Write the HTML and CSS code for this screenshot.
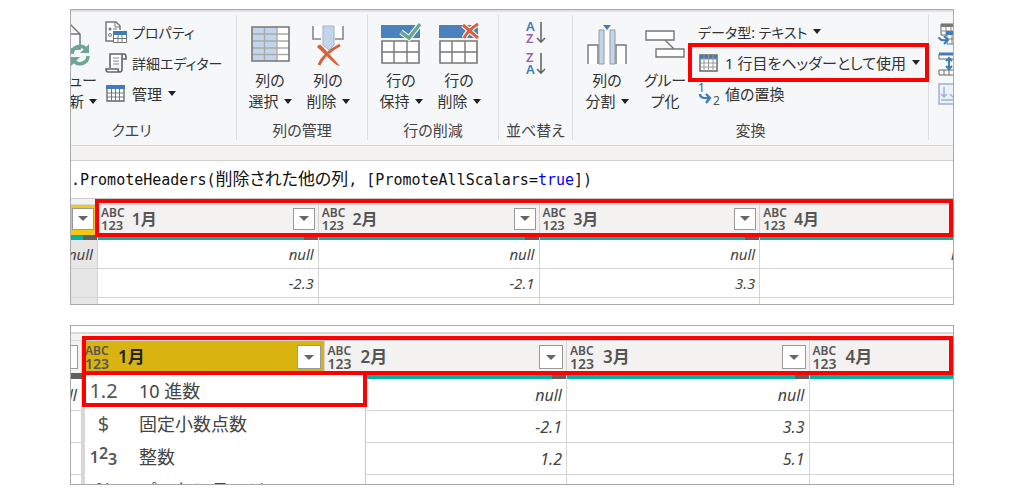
FILE: index.html
```html
<!DOCTYPE html>
<html lang="ja">
<head>
<meta charset="utf-8">
<title>Power Query エディター</title>
<link rel="stylesheet" href="styles.css">
</head>
<body>
<main class="page">
<section class="panel">
  <div class="ribbon">
    <div class="group group-query">
      <div class="tools">
        <button class="big refresh">
          <svg width="28" height="42" viewBox="0 0 28 42"><path d="M0 1h7l10 10v15H0M7 1v10h10" fill="#fff" stroke="#777" stroke-width="1.5"/><path d="M9 31a8 8 0 0 1 14-5M25 33a8 8 0 0 1-14 5" fill="none" stroke="#6aa88f" stroke-width="3.5"/><path d="M26 21v9h-9zM8 43v-9h9z" fill="#6aa88f"/></svg>
          <span>ビュー</span><span>新<i class="caret"></i></span>
        </button>
        <div class="stack">
          <button class="row kana"><svg width="22" height="22" viewBox="0 0 22 22"><path d="M8 20H1V1h10l4 4v4" fill="#fff" stroke="#777" stroke-width="1.5"/><path d="M10 1v5h5" fill="none" stroke="#777"/><circle cx="5" cy="8" r="1.5" fill="#777"/><circle cx="5" cy="14" r="1.5" fill="none" stroke="#777"/><path d="M8 8h4" stroke="#777"/><path d="M8.500 10.500h13v11h-13z" fill="#fff" stroke="#777"/><path d="M8 10h14v4H8z" fill="#3f7cbb"/><path d="M9 17.500h12M13 14v7M17 14v7" stroke="#777"/></svg>プロパティ</button>
          <button class="row kana"><svg width="22" height="22" viewBox="0 0 22 22"><path d="M5 16V2h14q2 0 2 3v2h-4M17 7V4q0-2 2-2M17 7v10q0 3-2 3H3q-2 0-2-3h12q0 3 2 3" fill="#fff" stroke="#666" stroke-width="1.6"/><path d="M8 6h6M8 9h6M8 12h6" stroke="#888"/></svg>詳細エディター</button>
          <button class="row"><svg width="22" height="20" viewBox="0 0 22 20"><path d="M2 2h17v15H2z" fill="#fff" stroke="#666" stroke-width="1.3"/><path d="M1 1h19v4H1z" fill="#3f7cbb"/><path d="M2 9h17M2 13h17M6.500 5v12M10.500 5v12M14.500 5v12" stroke="#777"/></svg>管理<i class="caret"></i></button>
        </div>
      </div>
      <div class="label">クエリ</div>
    </div>
    <div class="group">
      <div class="tools centered">
        <button class="big">
          <svg width="39" height="42" viewBox="0 0 39 42"><path d="M1 4h37v34H1z" fill="#fff"/><path d="M1 4h25v34H1z" fill="#c2d5ea"/><path d="M1 11h37M1 18h37M1 25h37M1 31.500h37M13.500 4v34M26 4v34" stroke="#aaa" stroke-width="1.4"/><path d="M1 4h37v34H1z" fill="none" stroke="#777" stroke-width="1.6"/></svg>
          <span>列の</span><span>選択<i class="caret"></i></span>
        </button>
        <button class="big">
          <svg width="34" height="42" viewBox="0 0 34 42"><path d="M2 3v13h8V3M32 3v13h-8V3" fill="#fff" stroke="none"/><path d="M2 3v13h8M32 3v13h-8" fill="none" stroke="#888" stroke-width="1.6"/><path d="M12 3h11v19l-5 5-6-5z" fill="#c2d5ea" stroke="#9fb3c9"/><path d="M6 24q2-4 5-1l18 20q-3 0-6-3z" fill="#d9603b"/><path d="M29 22q-16 8-21 20" fill="none" stroke="#d9603b" stroke-width="3"/></svg>
          <span>列の</span><span>削除<i class="caret"></i></span>
        </button>
      </div>
      <div class="label">列の管理</div>
    </div>
    <div class="group">
      <div class="tools centered">
        <button class="big">
          <svg width="42" height="42" viewBox="0 0 42 42"><path d="M1 2h39v13H1z" fill="#4a82bd"/><path d="M2 18h37v22H2z" fill="#fff" stroke="#777" stroke-width="1.6"/><path d="M2 29h37M14 18v22M27 18v22" stroke="#777" stroke-width="1.4"/><path d="M21 9l8 6L40 1" fill="none" stroke="#fff" stroke-width="5.500"/><path d="M21 9l8 6L40 1" fill="none" stroke="#6aa88f" stroke-width="3.5"/></svg>
          <span>行の</span><span>保持<i class="caret"></i></span>
        </button>
        <button class="big">
          <svg width="42" height="42" viewBox="0 0 42 42"><path d="M1 2h39v13H1z" fill="#4a82bd"/><path d="M2 18h37v22H2z" fill="#fff" stroke="#777" stroke-width="1.6"/><path d="M2 29h37M14 18v22M27 18v22" stroke="#777" stroke-width="1.4"/><path d="M25 2l15 13M40 1Q30 7 26 15" fill="none" stroke="#fff" stroke-width="5"/><path d="M25 2l15 13M40 1Q30 7 26 15" fill="none" stroke="#d9603b" stroke-width="3"/></svg>
          <span>行の</span><span>削除<i class="caret"></i></span>
        </button>
      </div>
      <div class="label">行の削減</div>
    </div>
    <div class="group">
      <div class="tools sorts">
        <button class="sort" aria-label="昇順"><svg width="20" height="24" viewBox="0 0 20 24"><text x="0" y="10" class="sort-a">A</text><text x="0" y="22" class="sort-z">Z</text><path d="M15 1v20M11 17l4 4 4-4" fill="none" stroke="#666" stroke-width="1.6"/></svg></button>
        <button class="sort" aria-label="降順"><svg width="20" height="24" viewBox="0 0 20 24"><text x="0" y="10" class="sort-z">Z</text><text x="0" y="22" class="sort-a">A</text><path d="M15 1v20M11 17l4 4 4-4" fill="none" stroke="#666" stroke-width="1.6"/></svg></button>
      </div>
      <div class="label">並べ替え</div>
    </div>
    <div class="group">
      <div class="tools transform">
        <button class="big">
          <svg width="40" height="42" viewBox="0 0 40 42"><path d="M1 41V22h10v19M39 41V22H29v19" fill="#fff" stroke="#777" stroke-width="1.4"/><path d="M12 41V7h5v34zM23 41V7h5v34z" fill="#c2d5ea" stroke="#999"/><path d="M18 41V7h4v34z" fill="#fff"/><path d="M16 2h8l-4 5z" fill="#3f7cbb"/></svg>
          <span>列の</span><span>分割<i class="caret"></i></span>
        </button>
        <button class="big">
          <svg width="40" height="42" viewBox="0 0 40 42"><path d="M20 17l9 9" stroke="#777" stroke-width="1.4"/><path d="M1 8h28v9H1zM11 26h28v8H11z" fill="#fff" stroke="#777" stroke-width="1.4"/></svg>
          <span>グルー</span><span>プ化</span>
        </button>
        <div class="stack">
          <button class="row kana">データ型: テキスト<i class="caret"></i></button>
          <button class="row marked"><svg width="22" height="20" viewBox="0 0 22 20"><path d="M2 2h17v16H2z" fill="#fff" stroke="#666" stroke-width="1.5"/><path d="M2 2h17v4H2z" fill="#3f7cbb"/><path d="M2 6h17M2 10h17M2 14h17M6 2v16M10.500 2v16M15 2v16" stroke="#999"/></svg>1 行目をヘッダーとして使用<i class="caret"></i></button>
          <button class="row"><svg width="22" height="24" viewBox="0 0 22 24"><text x="0" y="10" class="digit">1</text><text x="15" y="23" class="digit">2</text><path d="M2 12q0 5 9 4M8 12l4 4-4 5" fill="none" stroke="#3f7cbb" stroke-width="2.4"/></svg>値の置換</button>
        </div>
      </div>
      <div class="label">変換</div>
    </div>
    <div class="group last">
      <svg width="22" height="22" viewBox="0 0 22 22"><path d="M3 1h19v11H3z" fill="#fff" stroke="#666"/><path d="M3 1h19v3H3z" fill="#777"/><path d="M3 8h19M8 3v9M13 3v6" stroke="#888"/><path d="M9 9h13v12H9z" fill="#fff" stroke="#3f7cbb"/><path d="M8 8h14v4H8z" fill="#3f7cbb"/><path d="M9 16h13M14 12v9" stroke="#777"/><path d="M1 14q0 4 8 3M6 13l4 4-4 4" fill="none" stroke="#3f7cbb" stroke-width="2"/></svg>
      <svg width="22" height="22" viewBox="0 0 22 22"><path d="M1 1h21v5H1zM1 17h21v5H1z" fill="#fff" stroke="#666"/><path d="M1 1h21" stroke="#3f7cbb" stroke-width="3"/><path d="M6 17v5M11 17v5" stroke="#666"/><path d="M11 5v11M8 8l3-3 3 3M8 13l3 3 3-3" fill="none" stroke="#3f7cbb" stroke-width="2"/></svg>
      <svg width="22" height="22" viewBox="0 0 22 22"><path d="M1 1h24v20H1z" fill="#eef2f8" stroke="#9fb3d2" stroke-width="1.5"/><path d="M6 4v10M3 11l3 3 3-3M3 17h20M12 11l3 3 3-3" fill="none" stroke="#9fb3d2" stroke-width="1.5"/></svg>
    </div>
  </div>
  <div class="strip"></div>
  <div class="formula"><code>.PromoteHeaders(<span class="jp">削除された他の列</span>, [PromoteAllScalars=<span class="keyword">true</span>])</code></div>
  <div class="grid-wrap">
    <table class="grid grid-small">
      <colgroup><col class="edge"><col><col><col><col></colgroup>
      <thead><tr>
        <th class="selected"><div class="head"><button class="filter" aria-label="フィルター"></button></div><div class="bar"></div></th>
        <th><div class="head"><span class="type"><b>ABC</b><b>123</b></span><span class="name">1月</span><button class="filter" aria-label="フィルター"></button></div><div class="bar"></div></th>
        <th><div class="head"><span class="type"><b>ABC</b><b>123</b></span><span class="name">2月</span><button class="filter" aria-label="フィルター"></button></div><div class="bar"></div></th>
        <th><div class="head"><span class="type"><b>ABC</b><b>123</b></span><span class="name">3月</span><button class="filter" aria-label="フィルター"></button></div><div class="bar"></div></th>
        <th><div class="head"><span class="type"><b>ABC</b><b>123</b></span><span class="name">4月</span><button class="filter" aria-label="フィルター"></button></div><div class="bar"></div></th>
      </tr></thead>
      <tbody>
        <tr><td class="shaded"><div class="cell">null</div></td><td><div class="cell">null</div></td><td><div class="cell">null</div></td><td><div class="cell">null</div></td><td><div class="cell">null</div></td></tr>
        <tr><td class="shaded"><div class="cell"></div></td><td><div class="cell">-2.3</div></td><td><div class="cell">-2.1</div></td><td><div class="cell">3.3</div></td><td><div class="cell"></div></td></tr>
        <tr class="cut"><td class="shaded"></td><td></td><td></td><td></td><td></td></tr>
      </tbody>
    </table>
    <div class="frame frame-top"></div>
  </div>
</section>

<section class="panel">
  <div class="blank"></div>
  <div class="grid-wrap thick">
    <table class="grid grid-large">
      <colgroup><col class="edge"><col><col><col><col></colgroup>
      <thead><tr>
        <th><div class="head"><button class="filter" aria-label="フィルター"></button></div><div class="bar all-empty"></div></th>
        <th class="active"><div class="head"><span class="type"><b>ABC</b><b>123</b></span><span class="name">1月</span><button class="filter" aria-label="フィルター"></button></div><div class="bar"></div></th>
        <th><div class="head"><span class="type"><b>ABC</b><b>123</b></span><span class="name">2月</span><button class="filter" aria-label="フィルター"></button></div><div class="bar"></div></th>
        <th><div class="head"><span class="type"><b>ABC</b><b>123</b></span><span class="name">3月</span><button class="filter" aria-label="フィルター"></button></div><div class="bar"></div></th>
        <th><div class="head"><span class="type"><b>ABC</b><b>123</b></span><span class="name">4月</span><button class="filter" aria-label="フィルター"></button></div><div class="bar"></div></th>
      </tr></thead>
      <tbody>
        <tr><td><div class="cell">null</div></td><td></td><td><div class="cell">null</div></td><td><div class="cell">null</div></td><td></td></tr>
        <tr><td></td><td></td><td><div class="cell">-2.1</div></td><td><div class="cell">3.3</div></td><td></td></tr>
        <tr><td></td><td></td><td><div class="cell">1.2</div></td><td><div class="cell">5.1</div></td><td></td></tr>
        <tr class="cut"><td></td><td></td><td></td><td></td><td></td></tr>
      </tbody>
    </table>
    <div class="menu">
      <button class="item"><span class="glyph">1.2</span>10 進数</button>
      <button class="item"><span class="glyph">$</span>固定小数点数</button>
      <button class="item"><span class="glyph whole"><b>1</b><b class="up">2</b><b class="down">3</b></span>整数</button>
      <button class="item"><span class="glyph">%</span>パーセンテージ</button>
    </div>
    <div class="frame frame-header"></div>
    <div class="frame frame-item"></div>
  </div>
</section>
</main>
</body>
</html>
```
FILE: styles.css
```css
* { box-sizing: border-box; }
body {
  margin: 0;
  background: #fff;
  color: #333;
  font-family: "Noto Sans", "Noto Sans CJK JP", sans-serif;
  font-size: 15px;
}
button {
  margin: 0;
  padding: 0;
  border: 0;
  background: none;
  color: inherit;
  font: inherit;
}
svg { display: block; flex: none; overflow: visible; }

.page { display: flex; flex-direction: column; gap: 20px; padding: 9px 70px; }
.panel { border: 1px solid #aaa; overflow: hidden; background: #fff; }

/* Ribbon */
.ribbon {
  display: grid;
  grid-template-columns: 166fr 131fr 131fr 74fr 356fr 24fr;
  padding: 3px 0 5px;
  background: #f5f7f9;
  border-top: 2px solid #dfe1e4;
  border-bottom: 1px solid #d4d6d8;
  font-feature-settings: "palt";
  white-space: nowrap;
}
.group { min-width: 0; border-right: 1px solid #dcdee0; }
.tools { display: flex; height: 105px; }
.centered { justify-content: center; padding-right: 6px; }
.label { height: 20px; line-height: 20px; text-align: center; color: #444; }
.group-query .label { padding-right: 44px; }
.big {
  display: flex;
  flex-direction: column;
  align-items: center;
  flex: none;
  width: 58px;
  padding-top: 8px;
  line-height: 21px;
}
.big svg { margin-bottom: 5px; }
.refresh { width: 26px; align-items: flex-end; }
.refresh svg { margin-right: 6px; }
.caret {
  display: inline-block;
  margin-left: 5px;
  vertical-align: 3px;
  border: 4px solid transparent;
  border-top: 5px solid #222;
  border-bottom: 0;
}
.stack { display: flex; flex-direction: column; flex: 1; min-width: 0; padding-top: 1px; }
.row {
  display: flex;
  align-items: center;
  gap: 5px;
  height: 31px;
  padding-left: 8px;
}
.row .caret { margin-left: 1px; }
.kana { font-size: 14px; }
.transform { padding: 0 3px 0 5px; }
.transform .stack { margin-left: -2px; }
.transform .row { padding-left: 6px; }
.marked { outline: 4px solid #f00; }
.sorts { flex-direction: column; align-items: center; gap: 7px; padding-top: 6px; }
.sort-a, .sort-z { font: 600 13px "Noto Sans", sans-serif; fill: #3f7cbb; }
.sort-z { fill: #9560b4; }
.digit { font: 12px "Noto Sans", sans-serif; fill: #555; }
.last {
  display: flex;
  flex-direction: column;
  gap: 8px;
  padding: 8px 0 0 9px;
  border: 0;
}

/* Formula bar */
.strip { height: 15px; background: #f3f2f0; border-bottom: 1px solid #d0d0d0; }
.formula { height: 37px; line-height: 36px; color: #111; white-space: nowrap; }
.formula code { font-family: "DejaVu Sans Mono", monospace; font-size: 15px; }
.formula .jp {
  font-family: "Noto Sans CJK JP", sans-serif;
  font-size: 17px;
  line-height: 20px;
  font-feature-settings: "palt";
}
.keyword { color: #00f; }

/* Data preview */
.grid-wrap { position: relative; padding-top: 5px; background: #f3f2f1; border-top: 1px solid #ccc; }
.thick { padding-top: 6px; border-top: 2px solid #d8d8d8; }
.blank { height: 6px; }
.grid { table-layout: fixed; border-collapse: separate; border-spacing: 0; background: #fff; }
.grid-small { width: calc(100% + 28px); }
.grid-large { width: calc(100% + 99px); }
.grid-small .edge { width: 27px; }
.grid-large .edge { width: 11px; }
th, td { padding: 0; border-right: 1px solid #d4d4d4; }
td { border-bottom: 1px solid #d4d4d4; }
th { color: #555; font-weight: 600; background: #f3f2f1; border-top: 1px solid #d8d8d8; }
.head { display: flex; align-items: center; justify-content: flex-end; height: 30px; padding: 0 3px 3px; }
.type { display: flex; flex-direction: column; font-size: 12px; line-height: 12px; text-align: left; }
.type b { font-weight: 600; }
.type b + b { font-size: 13px; }
.name { flex: 1; padding-left: 7px; font-size: 16px; line-height: 24px; text-align: left; }
.filter {
  display: grid;
  place-items: center;
  flex: none;
  width: 22px;
  height: 22px;
  background: #fff;
  border: 1px solid #999;
}
.filter::after { content: ""; border: 5px solid transparent; border-top-color: #666; border-bottom: 0; }
.bar { height: 5px; background: #00b3a6; border-right: 14px solid #5f5f5f; }
.all-empty { background: #5f5f5f; }
.selected { background: #f2c811; }
.shaded { background: #e6e6e6; }
.cell {
  display: flex;
  justify-content: flex-end;
  align-items: center;
  height: 28px;
  padding-right: 4px;
  color: #444;
  font-style: italic;
}
.cut td { height: 6px; border-bottom: 0; }

.grid-large .head { height: 32px; padding-bottom: 0; }
.grid-large .bar { height: 6px; }
.grid-large .type { font-size: 12px; line-height: 13px; }
.grid-large .type b + b { font-size: 14px; }
.grid-large .name { padding-left: 9px; font-size: 17px; }
.grid-large .filter { width: 24px; height: 24px; }
.grid-large td { height: 32px; }
.grid-large .cell { height: 31px; font-size: 16px; }
.grid-large .cut td { height: 9px; }
.active { background: #d9b310; }
.active .name { color: #222; }

/* Type menu laid over the grid */
.menu {
  position: absolute;
  top: 39px;
  left: 11px;
  width: 284px;
  background: #fff;
  border: 1px solid #ccc;
  border-left: 3px solid #d8d8d8;
}
.item {
  display: flex;
  align-items: center;
  width: 100%;
  height: 33px;
  gap: 17px;
  color: #444;
  font-size: 18px;
  line-height: 24px;
}
.glyph { width: 37px; color: #555; font-size: 20px; text-align: center; }
.whole { display: flex; justify-content: center; align-items: center; font-size: 16px; line-height: 20px; }
.whole b { font-weight: 600; }
.whole .up { padding-bottom: 8px; }
.whole .down { padding-top: 4px; }

/* Red call-out frames */
.frame { position: absolute; border: 4px solid #f00; pointer-events: none; }
.frame-top { top: 0; left: 24px; right: 0; height: 38px; }
.frame-header { top: 2px; left: 11px; right: 0; height: 39px; }
.frame-item { top: 37px; left: 11px; width: 285px; height: 36px; }
```
